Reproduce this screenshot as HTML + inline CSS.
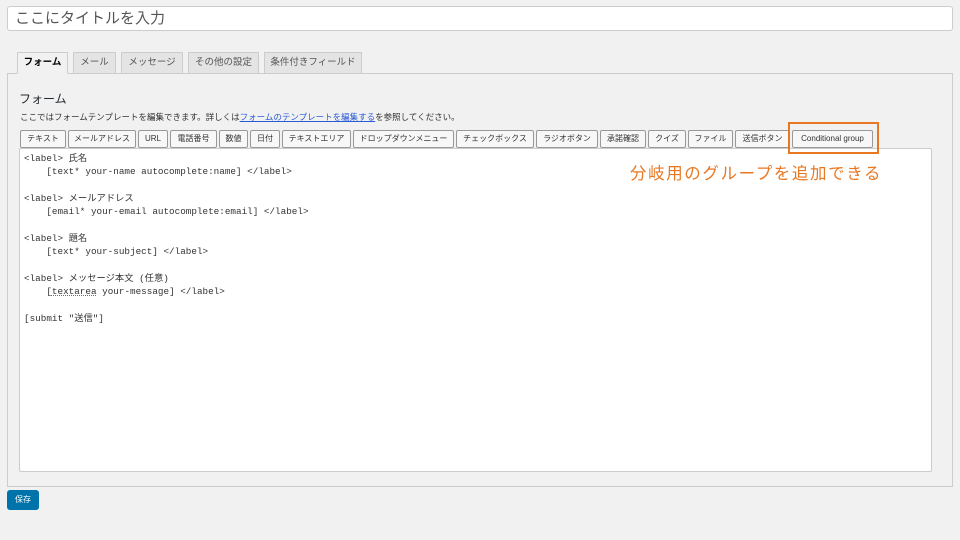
<!DOCTYPE html>
<html><head><meta charset="utf-8"><style>
*{box-sizing:border-box;margin:0;padding:0}
body{width:960px;height:540px;background:#f1f1f1;font-family:"Liberation Sans","Noto Sans CJK JP",sans-serif;position:relative;overflow:hidden;color:#23282d}
.abs{position:absolute}
.title{left:7px;top:6px;width:946px;height:25px;background:#fff;border:1px solid #ccc;border-radius:3px;font-size:15px;color:#555;padding:2px 7px;line-height:19px}
.tab{top:52px;height:22px;border:1px solid #ccc;background:#e4e4e4;font-size:9.5px;color:#555;text-align:center;line-height:20px}
.tab.on{background:#f1f1f1;border-bottom-color:#f1f1f1;color:#000;font-weight:bold;z-index:2}
.panel{left:7px;top:73px;width:946px;height:414px;border:1px solid #ccc;background:#f1f1f1}
.btn{top:130px;height:18px;border:1px solid #999;background:#f7f7f7;font-size:8px;color:#333;text-align:center;line-height:16px;border-radius:2px}
.ta{left:19px;top:148px;width:913px;height:324px;background:#fff;border:1px solid #ccc;border-radius:2px;font-family:"Liberation Mono","Noto Sans CJK JP",monospace;font-size:9.3px;line-height:13.35px;color:#333;padding:3px 4px;white-space:pre}
</style></head><body>
<div class="abs title">ここにタイトルを入力</div>
<div class="abs panel"></div>
<div class="abs tab on" style="left:17px;width:51px">フォーム</div>
<div class="abs tab" style="left:73px;width:43px">メール</div>
<div class="abs tab" style="left:121px;width:62px">メッセージ</div>
<div class="abs tab" style="left:188px;width:71px">その他の設定</div>
<div class="abs tab" style="left:264px;width:98px">条件付きフィールド</div>
<div class="abs" style="left:19px;top:90px;font-size:12px;color:#23282d">フォーム</div>
<div class="abs" style="left:20px;top:111px;font-size:8.5px;color:#333;white-space:nowrap">ここではフォームテンプレートを編集できます。詳しくは<span style="color:#2a5bd7;text-decoration:underline">フォームのテンプレートを編集する</span>を参照してください。</div>
<div class="abs btn" style="left:20px;width:46px">テキスト</div>
<div class="abs btn" style="left:68px;width:68px">メールアドレス</div>
<div class="abs btn" style="left:138px;width:30px">URL</div>
<div class="abs btn" style="left:170px;width:47px">電話番号</div>
<div class="abs btn" style="left:219px;width:29px">数値</div>
<div class="abs btn" style="left:250px;width:30px">日付</div>
<div class="abs btn" style="left:282px;width:69px">テキストエリア</div>
<div class="abs btn" style="left:353px;width:101px">ドロップダウンメニュー</div>
<div class="abs btn" style="left:456px;width:78px">チェックボックス</div>
<div class="abs btn" style="left:536px;width:62px">ラジオボタン</div>
<div class="abs btn" style="left:600px;width:46px">承諾確認</div>
<div class="abs btn" style="left:648px;width:38px">クイズ</div>
<div class="abs btn" style="left:688px;width:45px">ファイル</div>
<div class="abs btn" style="left:735px;width:55px">送信ボタン</div>
<div class="abs btn" style="left:792px;width:81px">Conditional group</div>
<div class="abs ta">&lt;label&gt; 氏名
    [text* your-name autocomplete:name] &lt;/label&gt;

&lt;label&gt; メールアドレス
    [email* your-email autocomplete:email] &lt;/label&gt;

&lt;label&gt; 題名
    [text* your-subject] &lt;/label&gt;

&lt;label&gt; メッセージ本文 (任意)
    [<span style="text-decoration:underline dotted #e33">textarea</span> your-message] &lt;/label&gt;

[submit "送信"]</div>
<div class="abs" style="left:788px;top:122px;width:91px;height:32px;border:2px solid #e87722"></div>
<div class="abs" style="left:630px;top:160px;font-size:16.5px;color:#e87722;letter-spacing:1.6px;white-space:nowrap">分岐用のグループを追加できる</div>
<div class="abs" style="left:7px;top:490px;width:32px;height:20px;background:#0073aa;border-radius:3px;color:#fff;font-size:8px;text-align:center;line-height:20px">保存</div>
</body></html>
